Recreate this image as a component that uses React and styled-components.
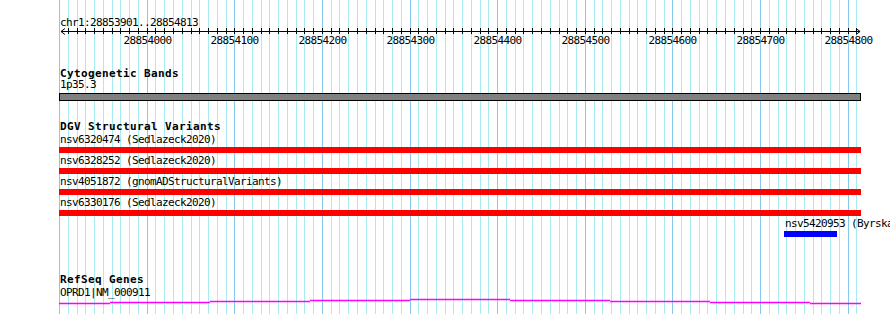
import styled, { createGlobalStyle } from "styled-components";

// genome coordinates -> page pixels
const REF_BP = 28854000;
const REF_X = 147.2;
const PX_PER_BP = 0.8762;
const TRACK_X = 59;
const TRACK_W = 802;
const VIEW_START = 28853901;
const VIEW_END = 28854813;

const xOf = (bp) => REF_X + (bp - REF_BP) * PX_PER_BP;
const localX = (bp) => xOf(bp) - TRACK_X;

const minorTicks = [];
for (let bp = 28853910; bp <= 28854810; bp += 10) minorTicks.push(bp);
const majorTicks = minorTicks.filter((bp) => bp % 100 === 0);

const variants = [
  { id: "nsv6320474", study: "Sedlazeck2020" },
  { id: "nsv6328252", study: "Sedlazeck2020" },
  { id: "nsv4051872", study: "gnomADStructuralVariants" },
  { id: "nsv6330176", study: "Sedlazeck2020" },
  { id: "nsv5420953", study: "Byrska-Bishop2022", start: 28854727, end: 28854787, color: "#0000ff" },
];

// the gene line steps a pixel every 100px
const geneSteps = [
  [59, 110, 5],
  [110, 210, 4],
  [210, 310, 3],
  [310, 410, 2],
  [410, 510, 1],
  [510, 610, 2],
  [610, 710, 3],
  [710, 810, 4],
  [810, 861, 5],
];

const GlobalStyle = createGlobalStyle`
  html, body {
    margin: 0;
    padding: 0;
    background: #ffffff;
    overflow: hidden;
  }
  body {
    font-family: "DejaVu Sans Mono", "Liberation Mono", monospace;
    color: #000000;
  }
`;

const Page = styled.div`
  position: relative;
  width: 890px;
  height: 314px;
  overflow: hidden;
  background: #ffffff;
`;

const GridLayer = styled.svg`
  position: absolute;
  left: 0;
  top: 0;
`;

const Panel = styled.div`
  position: relative;
  display: flex;
  flex-direction: column;
  padding: 18px 0 0 ${TRACK_X}px;
`;

const Location = styled.div`
  font-size: 11px;
  line-height: 10px;
  letter-spacing: -0.62px;
  padding-left: 1px;
  white-space: nowrap;
`;

const RulerSvg = styled.svg`
  display: block;
  overflow: visible;
  font-family: "DejaVu Sans Mono", "Liberation Mono", monospace;
  font-size: 11px;
  letter-spacing: -0.62px;
`;

const Track = styled.section`
  display: flex;
  flex-direction: column;
  margin-top: ${(p) => p.$gap}px;
`;

const TrackTitle = styled.h3`
  margin: 0;
  padding-left: 1px;
  font-size: 11px;
  line-height: 10px;
  font-weight: bold;
  letter-spacing: 0.38px;
  white-space: nowrap;
`;

const FeatureLabel = styled.div`
  margin-top: ${(p) => p.$gap || 0}px;
  padding-left: 1px;
  font-size: 11px;
  line-height: 10px;
  letter-spacing: -0.62px;
  white-space: nowrap;
`;

const BandBar = styled.div`
  box-sizing: border-box;
  width: ${TRACK_W}px;
  height: 8px;
  margin-top: 3px;
  background: #808080;
  border: 1px solid #000000;
`;

const VariantRow = styled.div`
  display: flex;
  flex-direction: column;
  align-items: flex-start;
  padding-bottom: 3px;
  &:first-of-type {
    margin-top: 3px;
  }
`;

const VariantBar = styled.div`
  height: 6px;
  margin-top: 2px;
  background: ${(p) => p.$color};
`;

const GeneSvg = styled.svg`
  display: block;
`;

const Grid = () => (
  <GridLayer width="890" height="314">
    {minorTicks.map((bp) => {
      const x = Math.floor(xOf(bp)) + 0.5;
      return (
        <line
          key={bp}
          x1={x}
          x2={x}
          y1="0"
          y2="314"
          stroke={bp % 100 === 0 ? "#86c8ee" : "#a6ecf0"}
        />
      );
    })}
    <line x1="59.5" x2="59.5" y1="0" y2="314" stroke="#86c8ee" />
  </GridLayer>
);

const Ruler = () => {
  const left = localX(VIEW_START) + 0.5;
  const right = localX(VIEW_END) + 0.5;
  return (
    <RulerSvg width="831" height="20">
      <line x1={left} x2={right} y1="3.5" y2="3.5" stroke="#000" />
      <polyline points={`${left + 4},0.5 ${left},3.5 ${left + 4},6.5`} fill="none" stroke="#000" />
      <polyline points={`${right - 4},0.5 ${right},3.5 ${right - 4},6.5`} fill="none" stroke="#000" />
      {minorTicks.map((bp) => {
        const x = Math.floor(xOf(bp)) - TRACK_X + 0.5;
        return <line key={bp} x1={x} x2={x} y1="0" y2="6" stroke="#000" />;
      })}
      {majorTicks.map((bp) => (
        <text key={bp} x={Math.floor(xOf(bp)) - TRACK_X + 0.5} y="16" textAnchor="middle" fill="#000">
          {bp}
        </text>
      ))}
    </RulerSvg>
  );
};

const Variant = ({ id, study, start, end, color = "#ff0000" }) => {
  const left = start ? Math.round(localX(start)) : 0;
  const width = start ? Math.round(localX(end)) - left : TRACK_W;
  return (
    <VariantRow style={{ marginLeft: left }}>
      <FeatureLabel>{`${id} (${study})`}</FeatureLabel>
      <VariantBar $color={color} style={{ width }} />
    </VariantRow>
  );
};

export default function App() {
  return (
    <Page>
      <GlobalStyle />
      <Grid />
      <Panel>
        <Location>chr1:28853901..28854813</Location>
        <Ruler />

        <Track $gap={21}>
          <TrackTitle>Cytogenetic Bands</TrackTitle>
          <FeatureLabel $gap={1}>1p35.3</FeatureLabel>
          <BandBar />
        </Track>

        <Track $gap={21}>
          <TrackTitle>DGV Structural Variants</TrackTitle>
          {variants.map((v) => (
            <Variant key={v.id} {...v} />
          ))}
        </Track>

        <Track $gap={35}>
          <TrackTitle>RefSeq Genes</TrackTitle>
          <FeatureLabel $gap={3}>OPRD1|NM_000911</FeatureLabel>
          <GeneSvg width={TRACK_W} height="8">
            {geneSteps.map(([x1, x2, y]) => (
              <rect key={x1} x={x1 - TRACK_X} y={y - 0.25} width={x2 - x1} height="1.5" fill="#ff00ff" />
            ))}
          </GeneSvg>
        </Track>
      </Panel>
    </Page>
  );
}
